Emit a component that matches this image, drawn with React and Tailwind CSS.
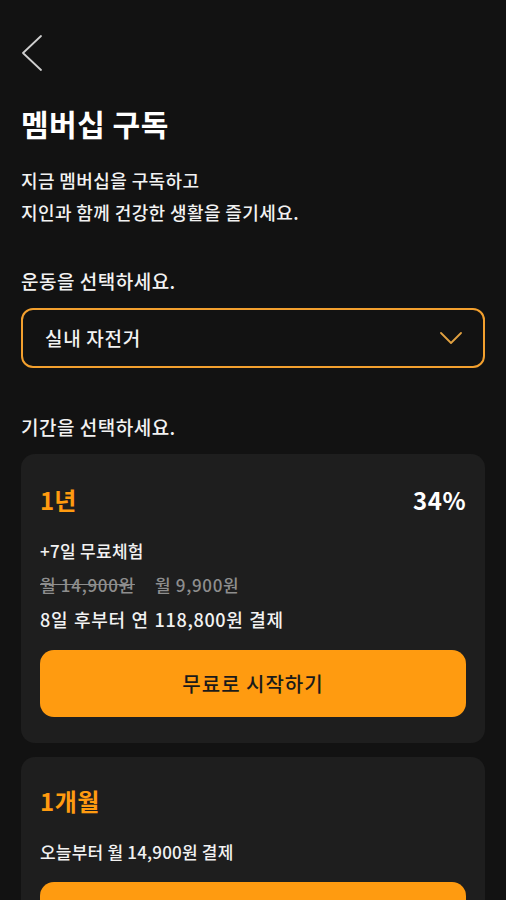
import React from "react";

const font = { fontFamily: '"Noto Sans CJK KR", "Noto Sans", sans-serif' };

function Card({ children, top = "pt-[28px]" }) {
  return (
    <div className={`rounded-[14px] bg-[#1e1e1e] px-[19px] pb-[26px] ${top}`}>{children}</div>
  );
}

function StartButton() {
  return (
    <button className="flex h-[67px] w-full items-center justify-center rounded-[14px] bg-[#ff9b10] text-[20px] font-medium tracking-[1px] text-[#1a1a1a]">
      무료로 시작하기
    </button>
  );
}

export default function App() {
  return (
    <div
      className="min-h-screen overflow-hidden bg-[#121212] px-[21px] text-[#f2f2f2]"
      style={font}
    >
      <div className="pt-[35px]">
        <svg width="22" height="36" viewBox="0 0 22 36" fill="none">
          <polyline
            points="20,1 2,18 20,35"
            stroke="#cfcfcf"
            strokeWidth="1.8"
            strokeLinecap="round"
            strokeLinejoin="round"
          />
        </svg>
      </div>

      <h1 className="mt-[34px] text-[30px] font-bold leading-[36px] tracking-[0.5px] text-white">
        멤버십 구독
      </h1>

      <p className="mt-[23px] text-[18px] font-medium leading-[32px] tracking-[0.4px]">
        지금 멤버십을 구독하고
        <br />
        지인과 함께 건강한 생활을 즐기세요.
      </p>

      <p className="mt-[37px] text-[19px] font-medium leading-[32px] tracking-[0.5px]">
        운동을 선택하세요.
      </p>

      <div className="mt-[11px] flex h-[60px] items-center justify-between rounded-[12px] border-2 border-[#f3a02e] pl-[22px] pr-[21px]">
        <span className="text-[19px] font-medium tracking-[0.7px]">실내 자전거</span>
        <svg width="22" height="12" viewBox="0 0 22 12" fill="none">
          <polyline
            points="1,1 11,11 21,1"
            stroke="#e0a040"
            strokeWidth="1.8"
            strokeLinecap="round"
            strokeLinejoin="round"
          />
        </svg>
      </div>

      <p className="mt-[43px] text-[19px] font-medium leading-[32px] tracking-[0.5px]">
        기간을 선택하세요.
      </p>

      <div className="mt-[11px] flex flex-col gap-[14px] pb-10">
        <Card>
          <div className="flex items-center justify-between leading-[36px]">
            <span className="text-[24px] font-bold text-[#ff9b10]">1년</span>
            <span className="text-[24px] font-bold tracking-[0.5px] text-white">34%</span>
          </div>
          <div className="mt-[16px] text-[17px] font-medium leading-[34px]">
            <div className="tracking-[0.3px]">+7일 무료체험</div>
            <div className="flex gap-[20px] tracking-[0.7px] text-[#8e8e8e]">
              <span className="line-through">월 14,900원</span>
              <span>월 9,900원</span>
            </div>
            <div className="text-[18px] tracking-[0.7px] [word-spacing:1px]">8일 후부터 연 118,800원 결제</div>
          </div>
          <div className="mt-[14px]">
            <StartButton />
          </div>
        </Card>

        <Card top="pt-[26px]">
          <div className="leading-[36px]">
            <span className="text-[24px] font-bold tracking-[0.5px] text-[#ff9b10]">1개월</span>
          </div>
          <div className="mt-[13px] text-[17px] font-medium leading-[34px]">
            <div className="tracking-[0.2px]">오늘부터 월 14,900원 결제</div>
          </div>
          <div className="mt-[13px]">
            <StartButton />
          </div>
        </Card>
      </div>
    </div>
  );
}
